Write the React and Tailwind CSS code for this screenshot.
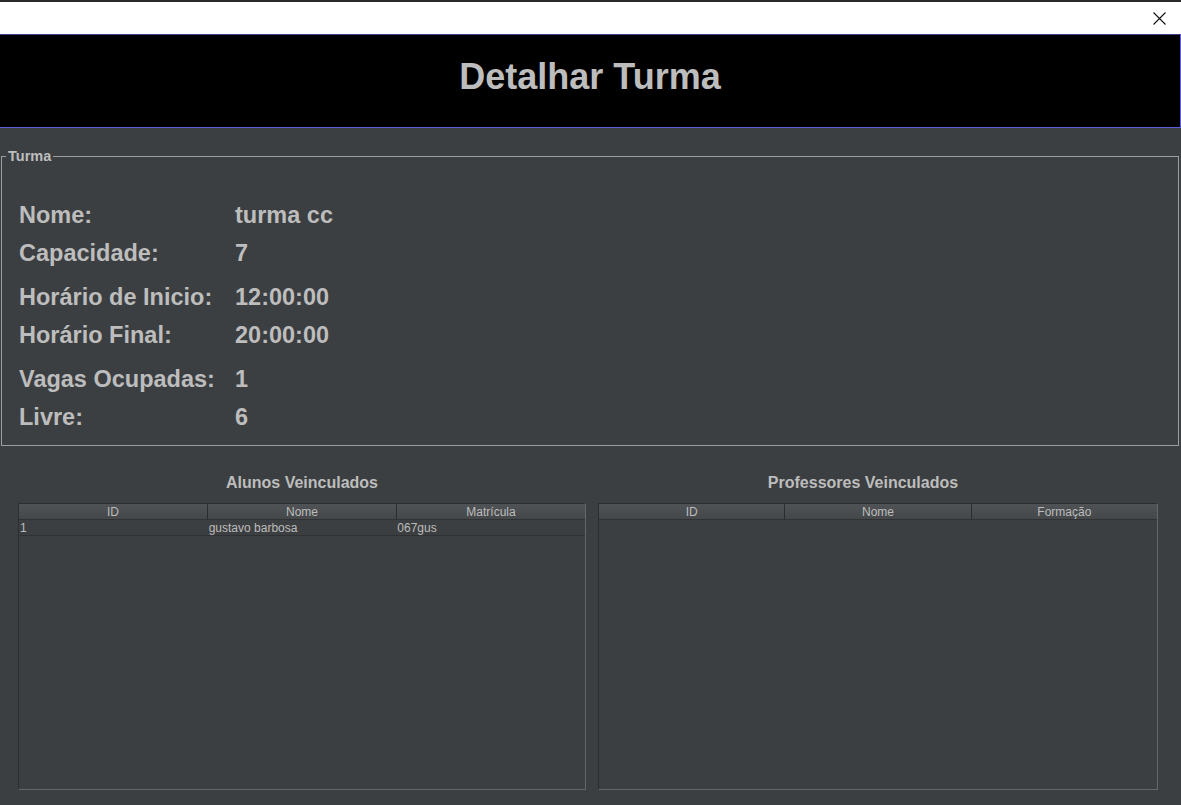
import React from 'react';

const font = { fontFamily: '"Liberation Sans", Arial, sans-serif' };

const rows = [
    [['Nome:', 'turma cc'], ['Capacidade:', '7']],
    [['Horário de Inicio:', '12:00:00'], ['Horário Final:', '20:00:00']],
    [['Vagas Ocupadas:', '1'], ['Livre:', '6']],
];

function DataTable({ columns, data, width }) {
    return (
        <div className={`${width} h-[287px] bg-[#3c3f41] border-t border-l border-[#2b2d2e] border-r border-b border-r-[#646668] border-b-[#646668]`}>
            <div className="flex h-[16px] bg-gradient-to-b from-[#505355] to-[#45484a] border-b border-[#2f3133]">
                {columns.map((c, i) => (
                    <div
                        key={c}
                        className={`flex-1 flex items-center justify-center text-[12px] leading-none text-[#bcbcbc] ${i < columns.length - 1 ? 'border-r border-[#2b2d2e]' : ''}`}
                    >
                        {c}
                    </div>
                ))}
            </div>
            {data.map((r, ri) => (
                <div key={ri} className="flex h-[16px] border-b border-[#2f3133]">
                    {r.map((v, i) => (
                        <div key={i} className="flex-1 flex items-center pl-[1px] text-[12px] leading-none text-[#bcbcbc]">
                            {v}
                        </div>
                    ))}
                </div>
            ))}
        </div>
    );
}

export default function App() {
    return (
        <div className="w-[1181px] h-[805px] overflow-hidden bg-[#3c3f41] flex flex-col" style={font}>
            {/* window title bar */}
            <div className="h-[2px] bg-[#2b2b2b]"></div>
            <div className="h-[32px] bg-white flex items-center justify-end pr-[14px]">
                <svg width="13" height="13" viewBox="0 0 13 13" className="mr-[1px]">
                    <path d="M0.5 0.5 L12.5 12.5 M12.5 0.5 L0.5 12.5" stroke="#111" strokeWidth="1.1" fill="none" />
                </svg>
            </div>

            {/* header */}
            <div className="h-[94px] bg-black border-t border-t-[#3b3b86] border-b border-b-[#5d5de0] border-r border-r-[#5d5de0] flex items-center justify-center">
                <h1 className="text-[36px] font-bold text-[#bdbdbd] leading-none -mt-[8px]">Detalhar Turma</h1>
            </div>

            {/* turma fieldset */}
            <fieldset className="mt-[20px] ml-[1px] w-[1178px] h-[298px] border border-[#9a9c9e]">
                <legend className="ml-[4px] px-[2px] text-[14.5px] font-bold text-[#bdbdbd] leading-[17px]">Turma</legend>
                <div className="pt-[32px] pl-[17px] flex flex-col gap-[6px]">
                    {rows.map((group, gi) => (
                        <div key={gi} className="flex flex-col">
                            {group.map(([label, value]) => (
                                <div key={label} className="flex h-[38px] items-center text-[23.5px] font-bold text-[#bdbdbd]">
                                    <span className="w-[216px]">{label}</span>
                                    <span>{value}</span>
                                </div>
                            ))}
                        </div>
                    ))}
                </div>
            </fieldset>

            {/* linked tables */}
            <div className="flex mt-[25px] ml-[18px] gap-[12px]">
                <div className="flex flex-col">
                    <div className="h-[32px] flex items-start justify-center text-[16px] font-bold text-[#bdbdbd]">Alunos Veinculados</div>
                    <DataTable
                        width="w-[568px]"
                        columns={['ID', 'Nome', 'Matrícula']}
                        data={[['1', 'gustavo barbosa', '067gus']]}
                    />
                </div>
                <div className="flex flex-col">
                    <div className="h-[32px] flex items-start justify-center pr-[30px] text-[16px] font-bold text-[#bdbdbd]">Professores Veinculados</div>
                    <DataTable
                        width="w-[560px]"
                        columns={['ID', 'Nome', 'Formação']}
                        data={[]}
                    />
                </div>
            </div>
        </div>
    );
}
